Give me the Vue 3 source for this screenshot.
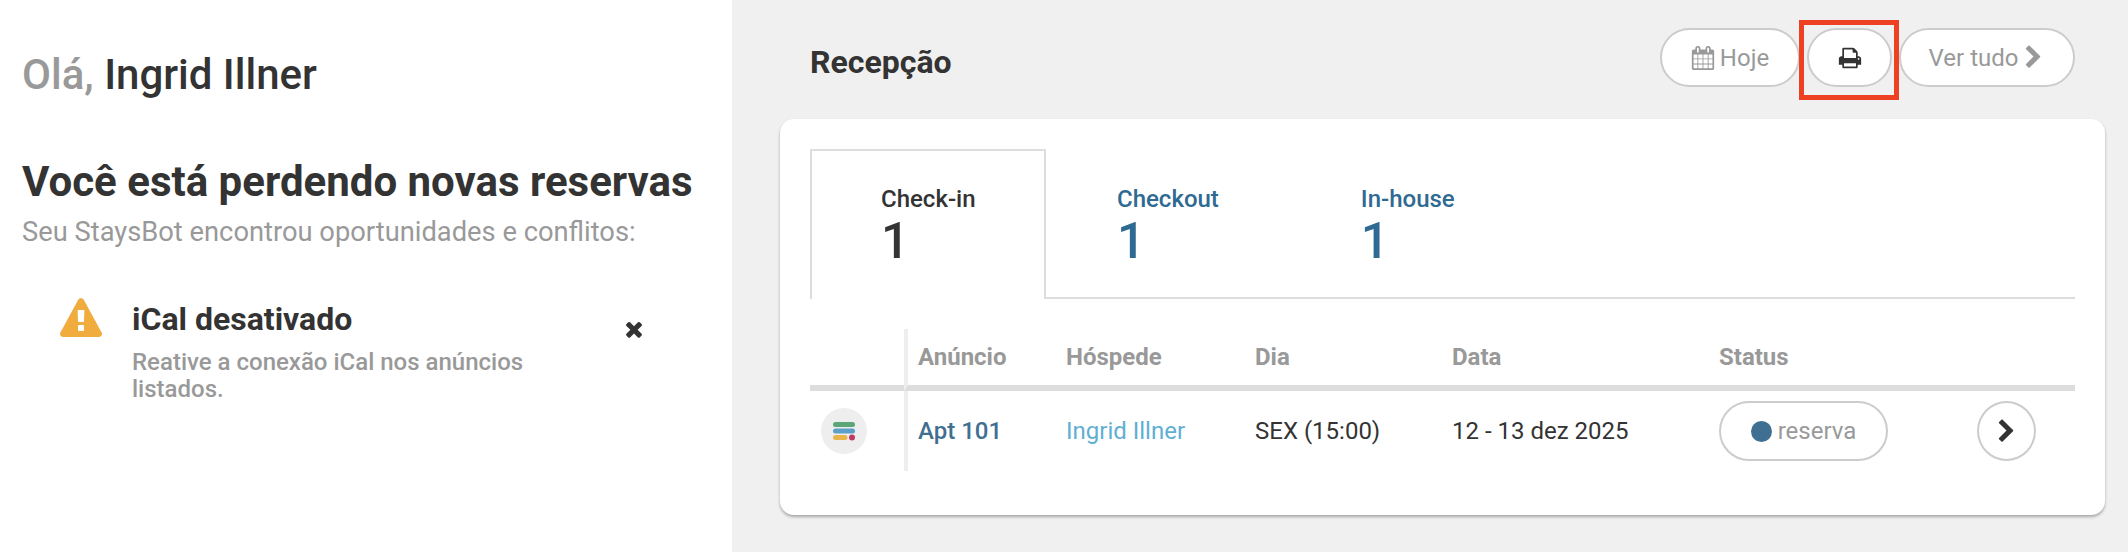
<script setup>
const tabs = [
  { label: "Check-in", count: 1, active: true },
  { label: "Checkout", count: 1, active: false },
  { label: "In-house", count: 1, active: false },
];
const columns = ["", "Anúncio", "Hóspede", "Dia", "Data", "Status", ""];

const icons = {
  calendar:
    "M192 1664h288v-288h-288v288zm352 0h320v-288h-320v288zm-352-352h288v-320h-288v320zm352 0h320v-320h-320v320zm-352-384h288v-288h-288v288zm736 736h320v-288h-320v288zm-384-736h320v-288h-320v288zm768 736h288v-288h-288v288zm-384-352h320v-320h-320v320zm-352-864v-288q0-13-9.5-22.5t-22.5-9.5h-64q-13 0-22.5 9.5t-9.5 22.5v288q0 13 9.5 22.5t22.5 9.5h64q13 0 22.5-9.5t9.5-22.5zm736 864h288v-320h-288v320zm-384-384h320v-288h-320v288zm384 0h288v-288h-288v288zm32-480v-288q0-13-9.5-22.5t-22.5-9.5h-64q-13 0-22.5 9.5t-9.5 22.5v288q0 13 9.5 22.5t22.5 9.5h64q13 0 22.5-9.5t9.5-22.5zm384-64v1280q0 52-38 90t-90 38h-1408q-52 0-90-38t-38-90v-1280q0-52 38-90t90-38h128v-96q0-66 47-113t113-47h64q66 0 113 47t47 113v96h384v-96q0-66 47-113t113-47h64q66 0 113 47t47 113v96h128q52 0 90 38t38 90z",
  print:
    "M448 1536h896v-256h-896v256zm0-640h896v-384h-160q-40 0-68-28t-28-68v-160h-640v640zm1152 64q0-26-19-45t-45-19-45 19-19 45 19 45 45 19 45-19 19-45zm128 0v416q0 13-9.5 22.5t-22.5 9.5h-224v160q0 40-28 68t-68 28h-960q-40 0-68-28t-28-68v-160h-224q-13 0-22.5-9.5t-9.5-22.5v-416q0-79 56.5-135.5t135.5-56.5h64v-544q0-40 28-68t68-28h672q40 0 88 20t76 48l152 152q28 28 48 76t20 88v256h64q79 0 135.5 56.5t56.5 135.5z",
  chevron:
    "M1363 877l-742 742q-19 19-45 19t-45-19l-166-166q-19-19-19-45t19-45l531-531-531-531q-19-19-19-45t19-45l166-166q19-19 45-19t45 19l742 742q19 19 19 45t-19 45z",
  times:
    "M1490 1322q0 40-28 68l-136 136q-28 28-68 28t-68-28l-294-294-294 294q-28 28-68 28t-68-28l-136-136q-28-28-28-68t28-68l294-294-294-294q-28-28-28-68t28-68l136-136q28-28 68-28t68 28l294 294 294-294q28-28 68-28t68 28l136 136q28 28 28 68t-28 68l-294 294 294 294q28 28 28 68z",
  warning:
    "M1024 1375v-190q0-14-9.5-23.5t-22.5-9.5h-192q-13 0-22.5 9.5t-9.5 23.5v190q0 14 9.5 23.5t22.5 9.5h192q13 0 22.5-9.5t9.5-23.5zm-2-374l18-459q0-12-10-19-13-11-24-11h-220q-11 0-24 11-10 7-10 21l17 457q0 10 10 16.5t24 6.5h185q14 0 23.5-6.5t10.5-16.5zm-14-934l768 1408q35 63-2 126-17 29-46.5 46t-63.5 17h-1536q-34 0-63.5-17t-46.5-46q-37-63-2-126l768-1408q17-31 47-49t65-18 65 18 47 49z",
};
</script>

<template>
  <div class="page">
    <section class="left">
      <h1 class="hello"><span class="hello-muted">Olá,</span> Ingrid Illner</h1>
      <h2 class="headline">Você está perdendo novas reservas</h2>
      <p class="sub">Seu StaysBot encontrou oportunidades e conflitos:</p>

      <div class="alert">
        <svg class="alert-icon" viewBox="0 0 1792 1792"><path :d="icons.warning" /></svg>
        <div class="alert-body">
          <div class="alert-title">iCal desativado</div>
          <div class="alert-text">Reative a conexão iCal nos anúncios listados.</div>
        </div>
        <svg class="alert-close" viewBox="0 0 1792 1792"><path :d="icons.times" /></svg>
      </div>
    </section>

    <section class="right">
      <header class="top">
        <h2 class="title">Recepção</h2>
        <div class="actions">
          <button class="pill hoje">
            <svg class="ico-cal" viewBox="0 0 1792 1792"><path :d="icons.calendar" /></svg>
            Hoje
          </button>
          <button class="pill print">
            <svg class="ico-print" viewBox="0 0 1792 1792"><path :d="icons.print" /></svg>
            <span class="marker"></span>
          </button>
          <button class="pill all">
            Ver tudo
            <svg class="ico-chev" viewBox="0 0 1792 1792"><path :d="icons.chevron" /></svg>
          </button>
        </div>
      </header>

      <div class="card">
        <div class="tabs">
          <div v-for="tab in tabs" :key="tab.label" class="tab" :class="{ active: tab.active }">
            <span class="tab-label">{{ tab.label }}</span>
            <span class="tab-count">{{ tab.count }}</span>
          </div>
        </div>

        <table class="table">
          <thead>
            <tr>
              <th v-for="(col, i) in columns" :key="i">{{ col }}</th>
            </tr>
          </thead>
          <tbody>
            <tr>
              <td>
                <span class="logo">
                  <svg viewBox="0 0 46 46" width="46" height="46">
                    <rect x="12" y="14" width="22" height="5" rx="2.5" fill="#5ba677" />
                    <rect x="12" y="20.5" width="22" height="5" rx="2.5" fill="#5c9fc7" />
                    <rect x="12" y="27" width="14.5" height="5" rx="2.5" fill="#e9b44c" />
                    <circle cx="31" cy="29.5" r="3" fill="#c0395f" />
                  </svg>
                </span>
              </td>
              <td class="listing">Apt 101</td>
              <td class="guest">Ingrid Illner</td>
              <td>SEX (15:00)</td>
              <td>12 - 13 dez 2025</td>
              <td>
                <span class="status"><i class="dot"></i>reserva</span>
              </td>
              <td>
                <span class="go">
                  <svg class="ico-go" viewBox="0 0 1792 1792"><path :d="icons.chevron" /></svg>
                </span>
              </td>
            </tr>
          </tbody>
        </table>
      </div>
    </section>
  </div>
</template>

<style scoped>
.page {
  display: flex;
  width: 2128px;
  height: 552px;
  overflow: hidden;
  font-family: Roboto, "Liberation Sans", sans-serif;
  color: #333;
  background: #fff;
}
.left {
  width: 732px;
  padding: 50px 0 0 22px;
  box-sizing: border-box;
  flex-shrink: 0;
}
.hello {
  margin: 0;
  font-size: 42px;
  line-height: 50px;
  font-weight: 500;
}
.hello-muted {
  color: #999;
}
.headline {
  margin: 57px 0 0;
  font-size: 42px;
  line-height: 50px;
  font-weight: 700;
}
.sub {
  margin: 3px 0 0;
  font-size: 27.3px;
  line-height: 44px;
  color: #999;
}
.alert {
  display: flex;
  align-items: flex-start;
  margin: 45px 0 0 38px;
}
.alert-icon {
  width: 42px;
  height: 42px;
  margin-top: -1px;
  fill: #f0ad3e;
  flex-shrink: 0;
}
.alert-body {
  width: 424px;
  margin-left: 30px;
}
.alert-title {
  font-size: 32px;
  line-height: 40px;
  font-weight: 700;
}
.alert-text {
  margin-top: 10px;
  font-size: 24px;
  line-height: 27px;
  font-weight: 500;
  color: #999;
}
.alert-close {
  width: 24px;
  height: 24px;
  margin: 18px 0 0 66px;
  fill: #333;
}

.right {
  flex: 1;
  background: #f0f0f0;
  padding: 28px 23px 0 48px;
  box-sizing: border-box;
}
.top {
  display: flex;
  justify-content: space-between;
  margin-right: 30px;
  margin-left: 30px;
}
.title {
  margin: 11px 0 0;
  font-size: 32px;
  line-height: 47px;
  font-weight: 700;
}
.actions {
  display: flex;
  gap: 7px;
}
.pill {
  position: relative;
  display: flex;
  align-items: center;
  justify-content: center;
  height: 59px;
  border: 2px solid #ccc;
  border-radius: 30px;
  background: #fff;
  font-family: inherit;
  font-size: 24px;
  color: #999;
  padding: 0;
}
.hoje {
  width: 140px;
  gap: 5px;
}
.print {
  width: 85px;
}
.all {
  width: 176px;
  gap: 3px;
  padding-left: 1px;
}
.ico-cal {
  width: 24px;
  height: 24px;
  fill: #999;
}
.ico-print {
  width: 24px;
  height: 24px;
  fill: #333;
}
.ico-chev {
  width: 25px;
  height: 25px;
  fill: #999;
}
.marker {
  position: absolute;
  left: -10px;
  right: -9px;
  top: -10px;
  bottom: -15px;
  border: 5px solid #ee4123;
}

.card {
  margin-top: 32px;
  height: 396px;
  padding: 30px 30px 0;
  box-sizing: border-box;
  background: #fff;
  border-radius: 14px;
  box-shadow: 0 2px 3px rgba(0, 0, 0, 0.3);
}
.tabs {
  display: flex;
  height: 150px;
  border-bottom: 2px solid #ddd;
  box-sizing: border-box;
}
.tab {
  display: flex;
  flex-direction: column;
  padding: 35px 70px 0;
  box-sizing: border-box;
  height: 150px;
  color: #2f6a92;
  margin-right: 2px;
  white-space: nowrap;
}
.tab.active {
  width: 236px;
  margin-right: 1px;
  background: #fff;
  color: #333;
  border: 2px solid #ddd;
  border-bottom: 0;
  padding: 33px 0 0 69px;
}
.tab-label {
  font-size: 24px;
  line-height: 30px;
  font-weight: 500;
}
.tab-count {
  margin-top: 1px;
  font-size: 50px;
  line-height: 52px;
  font-weight: 500;
}

.table {
  width: 100%;
  margin-top: 30px;
  border-collapse: separate;
  border-spacing: 0;
  table-layout: fixed;
  font-size: 24px;
}
.table th {
  height: 62px;
  padding: 0;
  border-bottom: 6px solid #ddd;
  box-sizing: border-box;
  text-align: left;
  font-weight: 700;
  color: #999;
}
.table td {
  height: 80px;
  padding: 0;
}
.table th:nth-child(1),
.table td:nth-child(1) {
  width: 94px;
}
.table th:nth-child(2),
.table td:nth-child(2) {
  width: 162px;
  padding-left: 10px;
  border-left: 4px solid #eee;
  box-sizing: border-box;
}
.table th:nth-child(3) {
  width: 189px;
}
.table th:nth-child(4) {
  width: 197px;
}
.table th:nth-child(5) {
  width: 267px;
}
.table th:nth-child(6) {
  width: 258px;
}
.logo {
  display: block;
  width: 46px;
  height: 46px;
  margin: 0 0 0 11px;
  border-radius: 50%;
  background: #eee;
}
.listing {
  font-weight: 500;
  color: #3f6f91;
}
.guest {
  color: #5fafd3;
}
.status {
  display: flex;
  align-items: center;
  justify-content: center;
  gap: 6px;
  box-sizing: border-box;
  width: 169px;
  height: 60px;
  border: 2px solid #ccc;
  border-radius: 30px;
  color: #999;
}
.dot {
  width: 21px;
  height: 21px;
  border-radius: 50%;
  background: #3f6f91;
}
.go {
  display: flex;
  align-items: center;
  justify-content: center;
  box-sizing: border-box;
  width: 59px;
  height: 60px;
  border: 2px solid #ccc;
  border-radius: 50%;
}
.ico-go {
  width: 25px;
  height: 25px;
  fill: #333;
}
</style>
